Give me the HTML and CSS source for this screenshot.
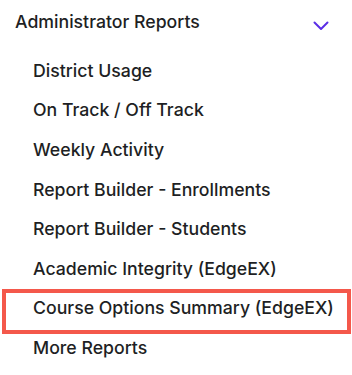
FILE: index.html
```html
<!DOCTYPE html>
<html lang="en">
<head>
<meta charset="utf-8">
<link rel="stylesheet" href="styles.css">
</head>
<body>
<nav class="menu">
  <div class="menu-header">
    <span class="menu-title">Administrator Reports</span>
    <svg class="chevron" width="16" height="10" viewBox="0 0 16 10" aria-hidden="true">
      <path d="M1.5 1.5 L8 8 L14.5 1.5" fill="none" stroke="#5b2ee6" stroke-width="2" stroke-linecap="round" stroke-linejoin="round"/>
    </svg>
  </div>
  <ul class="menu-list">
    <li class="menu-item">District Usage</li>
    <li class="menu-item">On Track / Off Track</li>
    <li class="menu-item">Weekly Activity</li>
    <li class="menu-item">Report Builder - Enrollments</li>
    <li class="menu-item">Report Builder - Students</li>
    <li class="menu-item">Academic Integrity (EdgeEX)</li>
    <li class="menu-item highlighted">Course Options Summary (EdgeEX)</li>
    <li class="menu-item">More Reports</li>
  </ul>
</nav>
</body>
</html>
```

FILE: styles.css
```css
html, body {
  margin: 0;
  padding: 0;
  background: #ffffff;
}

body {
  font-family: Inter, "Noto Sans", sans-serif;
  color: #1e1f24;
  width: 352px;
  height: 375px;
  overflow: hidden;
}

.menu {
  display: flex;
  flex-direction: column;
  padding-top: 10px;
}

.menu-header {
  display: flex;
  align-items: center;
  justify-content: space-between;
  padding: 0 23px 0 15px;
  height: 24px;
}

.menu-title {
  font-size: 17.7px;
  font-weight: 500;
  line-height: 24px;
}

.chevron {
  display: block;
  margin-top: 8px;
}

.menu-list {
  list-style: none;
  margin: 17px 0 0 0;
  padding: 0;
}

.menu-item {
  font-size: 17.7px;
  font-weight: 500;
  line-height: 24px;
  padding: 7.8px 0 7.8px 33px;
}

.highlighted {
  position: relative;
}

.highlighted::after {
  content: "";
  position: absolute;
  left: 2px;
  right: 1px;
  top: 0;
  bottom: -6px;
  border: 4px solid #f4584b;
}
```
